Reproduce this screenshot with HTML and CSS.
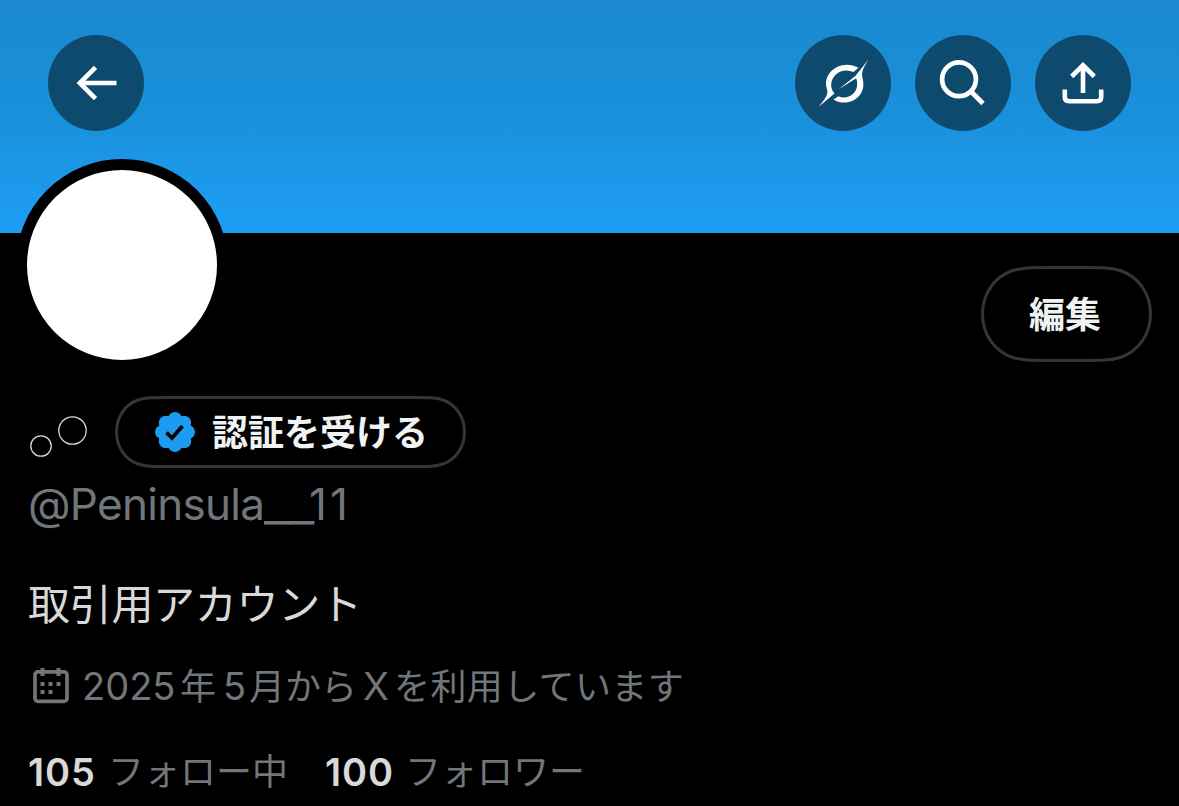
FILE: index.html
```html
<!DOCTYPE html>
<html lang="ja">
<head>
<meta charset="utf-8">
<title>プロフィール</title>
<link rel="stylesheet" href="styles.css">
</head>
<body>
<header class="banner">
  <button class="round" aria-label="戻る">
    <svg viewBox="0 0 96 96"><path d="M68.500 48H32M47.500 32.300L31.800 48l15.700 15.700" fill="none" stroke="#fff" stroke-width="4.600"/></svg>
  </button>
  <div class="actions">
    <button class="round" aria-label="Grok">
      <svg viewBox="0 0 96 96" fill="#fff"><path d="M43.400 54.500L59.400 41.700C60.600 40.800 61.100 40.200 61.900 38.900L73.500 24.500C68.500 32.800 66 36.300 67.600 43.500C71.500 57.500 61 67.500 49.500 67.500C45.500 67.500 42 66.600 38.400 64.400L43.500 61.200C51 65 62.200 60 62.200 49C62.200 47 61.900 45.200 61.200 43.300Z"/><path d="M63.500 32.800C52.500 26.500 41 30.500 35.500 37C29.500 44 30.800 50 32.200 55C33.300 59 31 62.500 24 71.500L39.500 58.500C32.500 50 38 39.800 45 36.800C49.500 34.800 54 35 58.500 37Z"/></svg>
    </button>
    <button class="round" aria-label="検索">
      <svg viewBox="0 0 96 96" fill="none" stroke="#fff" stroke-width="4.700"><circle cx="44" cy="44.300" r="16.900"/><path d="M56 56.500L68 68.500"/></svg>
    </button>
    <button class="round" aria-label="共有">
      <svg viewBox="0 0 96 96" fill="none" stroke="#fff" stroke-width="4.600"><path d="M48 58V31M36.700 41.500L48 30.300L59.300 41.500M29.800 54.500V62Q29.800 66.200 34 66.200H62Q66.200 66.200 66.200 62V54.500"/></svg>
    </button>
  </div>
</header>
<main class="profile">
  <div class="top-row">
    <div class="avatar"></div>
    <button class="pill edit">
      <svg class="outline" viewBox="0 0 171 96"><path d="M71 1.500H100C121 1.500 130.500 1.500 140.500 5C157 11 169.500 27 169.500 48S157 85 140.500 91C130.500 94.500 121 94.500 100 94.500H71C50 94.500 40.500 94.500 30.500 91C14 85 1.500 69 1.500 48S14 11 30.500 5C40.500 1.500 50 1.500 71 1.500Z"/></svg>
      <span>編集</span>
    </button>
  </div>
  <div class="name-row">
    <svg class="name-mark" viewBox="0 0 60 44" role="img" aria-label="𓂂𓏸"><circle cx="12" cy="31" r="10.200"/><circle cx="43.500" cy="15.500" r="13.700"/></svg>
    <button class="pill verify">
      <svg class="outline" viewBox="0 0 351 72"><path d="M53 1.500H298C314 1.500 321 1.500 328 4C341 8.500 349.500 21 349.500 36S341 63.500 328 68C321 70.500 314 70.500 298 70.500H53C37 70.500 30 70.500 23 68C10 63.500 1.500 51 1.500 36S10 8.500 23 4C30 1.500 37 1.500 53 1.500Z"/></svg>
      <svg class="badge" viewBox="0 0 40 40"><g fill="#1d9bf0"><circle cx="20" cy="20" r="16.500"/><circle cx="20" cy="7" r="7"/><circle cx="29.200" cy="10.800" r="7"/><circle cx="33" cy="20" r="7"/><circle cx="29.200" cy="29.200" r="7"/><circle cx="20" cy="33" r="7"/><circle cx="10.800" cy="29.200" r="7"/><circle cx="7" cy="20" r="7"/><circle cx="10.800" cy="10.800" r="7"/></g><path d="M11.500 20.500L17 26L27.500 14" fill="none" stroke="#000" stroke-width="3.800"/></svg>
      <span>認証を受ける</span>
    </button>
  </div>
  <div class="handle"><span class="word">@Peninsula</span><span class="underscores">__</span><span class="ones">11</span></div>
  <p class="bio">取引用アカウント</p>
  <div class="joined">
    <svg class="calendar" viewBox="0 0 36 36"><rect x="2" y="3.900" width="32" height="29.500" rx="3" fill="none" stroke="#71767b" stroke-width="3.700"/><path fill="#71767b" d="M7.500 0h4v8h-4zM23.500 0h4v8h-4zM15.500 14h4v4h-4zM23.500 14h4v4h-4zM7.500 14h4v4h-4zM7.500 22h4v4h-4zM15.500 22h4v4h-4z"/></svg>
    <span class="year">2025</span><span class="kanji-year">年</span><span class="month">5</span><span class="from">月から</span><span class="x">X</span><span class="rest">を利用しています</span>
  </div>
  <div class="stats">
    <div class="stat"><b>105</b><span>フォロー中</span></div>
    <div class="stat"><b>100</b><span>フォロワー</span></div>
  </div>
</main>
</body>
</html>
```
FILE: styles.css
```css
* { box-sizing: border-box; }
body {
  margin: 0;
  width: 1179px;
  height: 806px;
  overflow: hidden;
  background: #000;
  color: #d9d9d9;
  font-family: Inter, "Noto Sans CJK JP", sans-serif;
}
button { padding: 0; border: 0; background: none; color: inherit; font: inherit; }
svg { display: block; flex: none; }
.banner {
  display: flex;
  justify-content: space-between;
  height: 233px;
  padding: 35px 48px 0;
  background: linear-gradient(#1a89cf, #1a90db 48%, #1d9bf0 90%, #1d9df2);
}
.actions { display: flex; gap: 24px; }
.round { width: 96px; height: 96px; border-radius: 50%; background: #0d4a6e; }
.profile { padding: 0 27px 0 28px; }
.top-row {
  display: flex;
  justify-content: space-between;
  height: 237px;
  margin: -74px 0 0 -12px;
}
.avatar {
  width: 212px;
  height: 212px;
  border: 11px solid #000;
  border-radius: 50%;
  background: #fff;
}
.pill {
  position: relative;
  display: flex;
  align-items: center;
  color: #eff3f4;
  font-size: 36px;
  font-weight: 700;
  line-height: 48px;
}
.pill span { padding-top: 2px; }
.outline { position: absolute; inset: 0; fill: none; stroke: #333639; stroke-width: 3; }
.edit { width: 171px; height: 96px; margin-top: 107px; padding-right: 3px; justify-content: center; }
.name-row { display: flex; height: 72px; }
.name-mark { width: 60px; height: 44px; margin: 19px 27px 0 1px; fill: none; stroke: #d9d9d9; stroke-width: 1.3; }
.verify { width: 351px; height: 72px; padding-left: 40px; gap: 17px; margin-left: -1px; }
.badge { width: 40px; height: 40px; }
.handle {
  display: flex;
  height: 72px;
  color: #71767b;
  font-size: 44px;
  line-height: 72px;
  white-space: nowrap;
}
.word { width: 235px; letter-spacing: -0.7px; }
.underscores { width: 46px; letter-spacing: -1px; transform: translate(1px, 1px) scaleX(1.29); transform-origin: 0 50%; }
.ones { letter-spacing: 3px; }
.bio { height: 60px; margin: 34px 0 0; font-size: 42px; line-height: 62px; letter-spacing: -0.3px; }
.joined {
  display: flex;
  align-items: center;
  height: 60px;
  margin-top: 22px;
  padding-left: 5px;
  color: #71767b;
  font-size: 36px;
  line-height: 62px;
}
.calendar { width: 36px; height: 36px; margin-right: 13px; }
.year { width: 98px; font-size: 38px; }
.kanji-year { width: 43px; padding-top: 2px; }
.month { width: 26px; font-size: 38px; }
.from { width: 114px; padding-top: 2px; }
.x { width: 31px; font-size: 38px; }
.rest { padding-top: 2px; letter-spacing: 0.4px; white-space: nowrap; }
.stats { display: flex; height: 60px; margin-top: 26px; font-size: 36px; line-height: 60px; }
.stat { display: flex; width: 297px; white-space: nowrap; }
.stat b { width: 80px; font-size: 38px; font-weight: 600; letter-spacing: 0.9px; }
.stat span { color: #71767b; }
```
